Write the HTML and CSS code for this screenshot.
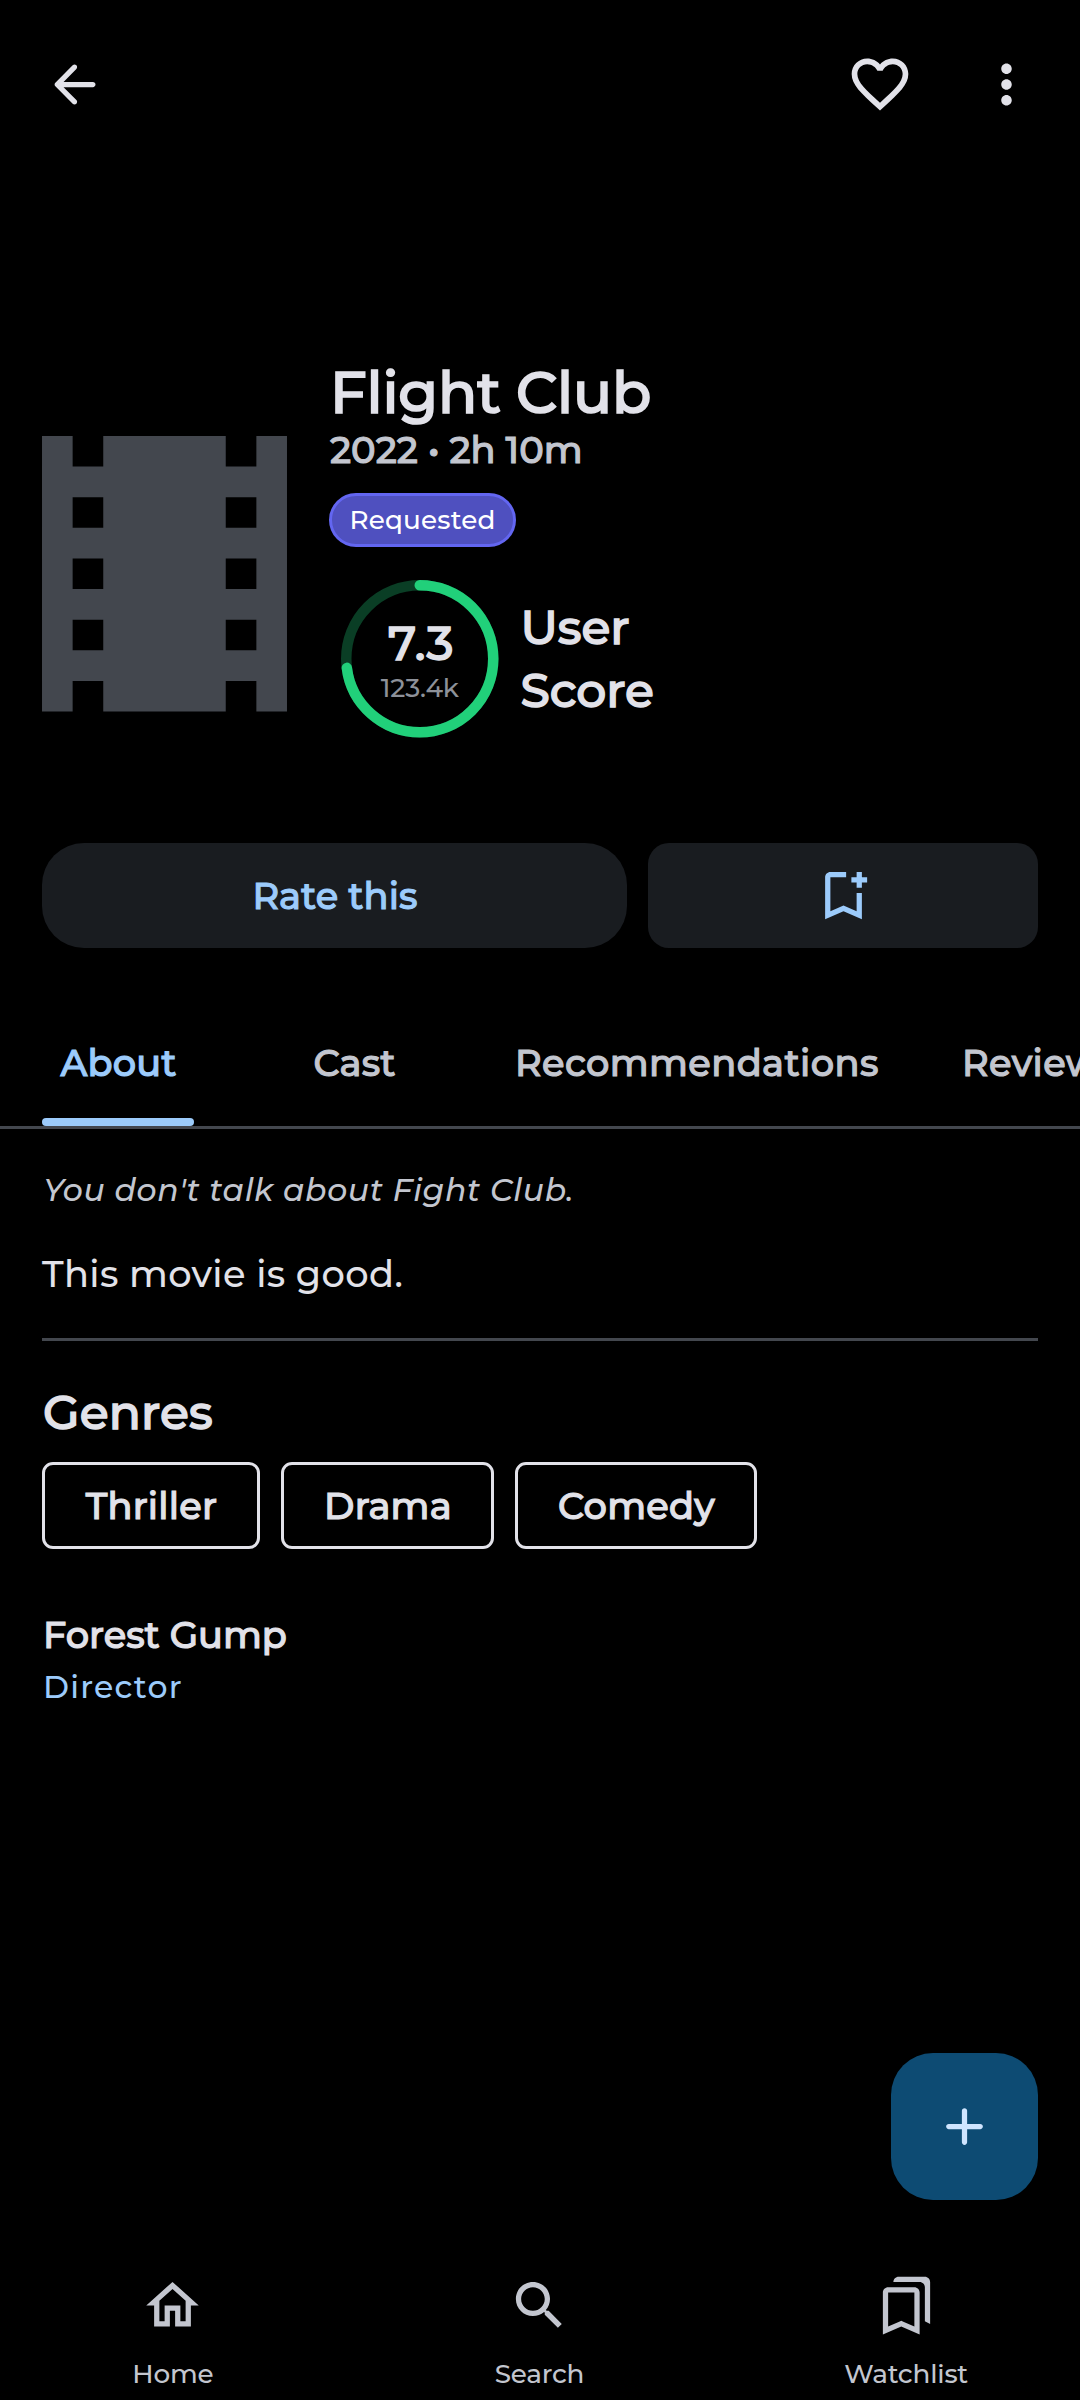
FILE: index.html
```html
<!DOCTYPE html>
<html lang="en">
<head>
<meta charset="utf-8">
<title>Flight Club</title>
<link rel="stylesheet" href="styles.css">
</head>
<body>
<div class="screen">
  <header class="topbar">
    <svg class="icon" viewBox="0 0 24 24"><path d="M19 11H7.83l4.88-4.88c.39-.39.39-1.03 0-1.42a1 1 0 0 0-1.41 0l-6.59 6.59c-.39.39-.39 1.02 0 1.41l6.59 6.59c.39.39 1.02.39 1.41 0 .39-.39.39-1.02 0-1.41L7.83 13H19c.55 0 1-.45 1-1s-.45-1-1-1z"/></svg>
    <svg class="icon icon-heart" viewBox="0 0 24 24"><path d="M16.5 3c-1.74 0-3.41.81-4.5 2.09C10.91 3.81 9.24 3 7.5 3 4.42 3 2 5.42 2 8.5c0 3.78 3.4 6.86 8.55 11.54L12 21.35l1.45-1.32C18.6 15.36 22 12.28 22 8.5 22 5.42 19.58 3 16.5 3zm-4.4 15.55l-.1.1-.1-.1C7.14 14.24 4 11.39 4 8.5 4 6.5 5.5 5 7.5 5c1.54 0 3.04.99 3.57 2.36h1.87C13.46 5.99 14.96 5 16.5 5c2 0 3.5 1.5 3.5 3.5 0 2.89-3.14 5.74-7.9 10.05z"/></svg>
    <svg class="icon" viewBox="0 0 24 24"><path d="M12 8c1.1 0 2-.9 2-2s-.9-2-2-2-2 .9-2 2 .9 2 2 2zm0 2c-1.1 0-2 .9-2 2s.9 2 2 2 2-.9 2-2-.9-2-2-2zm0 6c-1.1 0-2 .9-2 2s.9 2 2 2 2-.9 2-2-.9-2-2-2z"/></svg>
  </header>

  <section class="hero">
    <svg class="poster" viewBox="4 3 16 18"><path d="M18 3v2h-2V3H8v2H6V3H4v18h2v-2h2v2h8v-2h2v2h2V3h-2zM8 17H6v-2h2v2zm0-4H6v-2h2v2zm0-4H6V7h2v2zm10 8h-2v-2h2v2zm0-4h-2v-2h2v2zm0-4h-2V7h2v2z"/></svg>
    <div class="info">
      <h1 class="title strong">Flight Club</h1>
      <p class="meta strong">2022 • 2h 10m</p>
      <span class="badge">Requested</span>
      <div class="score">
        <div class="ring">
          <svg class="ring-art" viewBox="0 0 157.5 157.5">
            <circle class="ring-track" cx="78.75" cy="78.75" r="73.5"/>
            <circle class="ring-value" cx="78.75" cy="78.75" r="73.5" pathLength="100" stroke-dasharray="73 100" transform="rotate(-90 78.75 78.75)"/>
          </svg>
          <div class="ring-text">
            <span class="rating strong">7.3</span>
            <span class="votes">123.4k</span>
          </div>
        </div>
        <p class="score-label strong">User<br>Score</p>
      </div>
    </div>
  </section>

  <div class="actions">
    <div class="button button-rate strong">Rate this</div>
    <div class="button button-save">
      <svg class="icon" viewBox="0 0 24 24"><path d="M17 11v6.97l-5-2.14-5 2.14V5h6V3H7c-1.1 0-2 .9-2 2v16l7-3 7 3V11h-2zm4-4h-2v2h-2V7h-2V5h2V3h2v2h2v2z"/></svg>
    </div>
  </div>

  <nav class="tabs">
    <div class="tab tab-active strong">About</div>
    <div class="tab strong">Cast</div>
    <div class="tab tab-wide strong">Recommendations</div>
    <div class="tab tab-last strong">Reviews</div>
  </nav>

  <main class="about">
    <p class="tagline">You don't talk about Fight Club.</p>
    <p class="overview">This movie is good.</p>
    <hr class="divider">
    <h2 class="heading strong">Genres</h2>
    <div class="chips">
      <span class="chip strong">Thriller</span>
      <span class="chip strong chip-drama">Drama</span>
      <span class="chip strong">Comedy</span>
    </div>
    <p class="person strong">Forest Gump</p>
    <p class="role">Director</p>
  </main>

  <div class="fab">
    <svg class="icon" viewBox="0 0 24 24"><path d="M18 13h-5v5c0 .55-.45 1-1 1s-1-.45-1-1v-5H6c-.55 0-1-.45-1-1s.45-1 1-1h5V6c0-.55.45-1 1-1s1 .45 1 1v5h5c.55 0 1 .45 1 1s-.45 1-1 1z"/></svg>
  </div>

  <nav class="bottom-nav">
    <div class="nav-item">
      <svg class="icon" viewBox="0 0 24 24"><path d="M12 5.69l5 4.5V18h-2v-6H9v6H7v-7.81l5-4.5M12 3L2 12h3v8h6v-6h2v6h6v-8h3L12 3z"/></svg>
      <span class="nav-label">Home</span>
    </div>
    <div class="nav-item">
      <svg class="icon" viewBox="0 0 24 24"><path d="M15.5 14h-.79l-.28-.27C15.41 12.59 16 11.11 16 9.5 16 5.91 13.09 3 9.5 3S3 5.91 3 9.5 5.91 16 9.5 16c1.61 0 3.09-.59 4.23-1.57l.27.28v.79l5 4.99L20.49 19l-4.99-5zm-6 0C7.01 14 5 11.99 5 9.5S7.01 5 9.5 5 14 7.01 14 9.5 11.99 14 9.5 14z"/></svg>
      <span class="nav-label">Search</span>
    </div>
    <div class="nav-item">
      <svg class="icon" viewBox="0 0 24 24"><path d="M15 7v12.97l-4.21-1.81-.79-.34-.79.34L5 19.97V7h10m4-6H8.99C7.89 1 7 1.9 7 3h10c1.1 0 2 .9 2 2v13l2 1V3c0-1.1-.9-2-2-2zm-4 4H5c-1.1 0-2 .9-2 2v16l7-3 7 3V7c0-1.1-.9-2-2-2z"/></svg>
      <span class="nav-label">Watchlist</span>
    </div>
  </nav>
</div>
</body>
</html>
```
FILE: styles.css
```css
* { box-sizing: border-box; }

body {
  margin: 0;
  background: #000;
  color: #e2e2e9;
  font-family: Montserrat, Inter, sans-serif;
  font-weight: 500;
}

h1, h2, p { margin: 0; font-weight: 500; }

/* Emphasis drawn by thickening the medium weight */
.strong { -webkit-text-stroke: 0.03em currentColor; }

.screen {
  position: relative;
  display: flex;
  flex-direction: column;
  width: 1080px;
  height: 2400px;
  overflow: hidden;
}

.icon { display: block; width: 63px; height: 63px; fill: currentColor; }

.topbar {
  display: flex;
  align-items: center;
  height: 168px;
  padding: 0 42.5px 0 43px;
}
.icon-heart { width: 68px; height: 68px; margin-left: auto; margin-right: 60.5px; }

.hero {
  display: flex;
  gap: 42px;
  margin-top: 189px;
  padding: 0 42px;
}
.poster {
  width: 245px;
  height: 275.6px;
  margin: 79.4px -0.4px 0 0.4px;
  fill: #43474e;
}
.info { display: flex; flex-direction: column; align-items: flex-start; }
.title { padding-left: 1px; font-size: 57.75px; line-height: 70px; letter-spacing: -0.2px; }
.meta { padding-left: 1px; font-size: 36.75px; line-height: 46px; letter-spacing: 0.05px; color: #c3c6cf; }
.badge {
  display: flex;
  align-items: center;
  justify-content: center;
  width: 187px;
  height: 54px;
  margin-top: 20px;
  border: 3px solid #6366f1;
  border-radius: 27px;
  background: #4f50bf;
  color: #fff;
  font-size: 26.25px;
  letter-spacing: 0.2px;
}

.score { display: flex; align-items: center; gap: 22px; margin: 33px 0 0 12px; }
.ring { display: grid; width: 157.5px; height: 157.5px; }
.ring-art, .ring-text { grid-area: 1 / 1; }
.ring-art { width: 157.5px; height: 157.5px; }
.ring-track, .ring-value { fill: none; stroke-width: 10.5; }
.ring-track { stroke: #0a3e25; }
.ring-value { stroke: #21d07a; stroke-linecap: round; }
.ring-text {
  display: flex;
  flex-direction: column;
  align-items: center;
  padding-top: 41px;
}
.rating { padding-left: 3px; font-size: 47.25px; line-height: 44px; letter-spacing: 0.75px; }
.votes { font-size: 26.25px; line-height: 46px; letter-spacing: -0.22px; color: #8d9199; }
.score-label { font-size: 47.25px; line-height: 63px; letter-spacing: -0.05px; }

.actions {
  display: grid;
  grid-template-columns: 585px 390px;
  gap: 21px;
  margin-top: 105.5px;
  padding: 0 42px;
}
.button {
  display: flex;
  align-items: center;
  justify-content: center;
  height: 105px;
  background: #191c20;
  color: #9ccbfb;
}
.button-rate { padding-left: 1px; border-radius: 42px; font-size: 36.75px; letter-spacing: 0.1px; }
.button-save { border-radius: 21px; }

.tabs {
  display: flex;
  flex-shrink: 0;
  height: 129px;
  margin-top: 52px;
  border-bottom: 3px solid #43474e;
  overflow: hidden;
}
.tab {
  position: relative;
  flex: none;
  width: 236px;
  padding-left: 1px;
  color: #c3c6cf;
  font-size: 36.75px;
  line-height: 125px;
  letter-spacing: 0.1px;
  text-align: center;
}
.tab-active { color: #9ccbfb; }
.tab-active::after {
  content: "";
  position: absolute;
  left: 42px;
  right: 42px;
  bottom: 0;
  height: 8px;
  border-radius: 4px;
  background: #9ccbfb;
}
.tab-wide { width: 447px; padding-left: 43px; text-align: left; letter-spacing: 0.4px; }
.tab-last { padding-left: 43px; text-align: left; letter-spacing: 0.4px; }

.about { flex: 1; padding: 40px 42px 0; }
.tagline { padding-left: 1px; font-size: 31.5px; line-height: 42px; letter-spacing: 0.62px; font-style: italic; color: #c3c6cf; }
.overview { margin-top: 39px; font-size: 36.75px; line-height: 48px; letter-spacing: 0.38px; }
.divider { height: 3px; margin: 40px 0 41px; border: 0; background: #43474e; }
.heading { padding-left: 1px; font-size: 47.25px; line-height: 60px; letter-spacing: 0.15px; }
.chips { display: flex; gap: 21px; margin-top: 20px; }
.chip {
  width: 218px;
  height: 87px;
  padding-left: 1px;
  border: 3px solid #e2e2e9;
  border-radius: 11px;
  font-size: 36.75px;
  line-height: 81px;
  letter-spacing: 0.25px;
  text-align: center;
}
.chip-drama { width: 213px; }
.chip:last-child { width: 242px; }
.person { padding-left: 1px; margin-top: 62px; font-size: 36.75px; line-height: 48px; letter-spacing: 0; }
.role { padding-left: 1px; margin-top: 7px; font-size: 31.5px; line-height: 42px; letter-spacing: 1.2px; color: #9ccbfb; }

.fab {
  position: absolute;
  right: 42px;
  bottom: 200px;
  display: flex;
  align-items: center;
  justify-content: center;
  width: 147px;
  height: 147px;
  border-radius: 42px;
  background: #0d4b73;
  color: #cfe5ff;
}

.bottom-nav {
  display: grid;
  grid-template-columns: repeat(3, 1fr);
  gap: 21px;
  height: 147px;
  padding: 21px 1px 0 0;
  color: #c3c6cf;
}
.nav-item { display: flex; flex-direction: column; align-items: center; gap: 16px; }
.nav-label { font-size: 26.25px; line-height: 42px; letter-spacing: -0.2px; }
```
